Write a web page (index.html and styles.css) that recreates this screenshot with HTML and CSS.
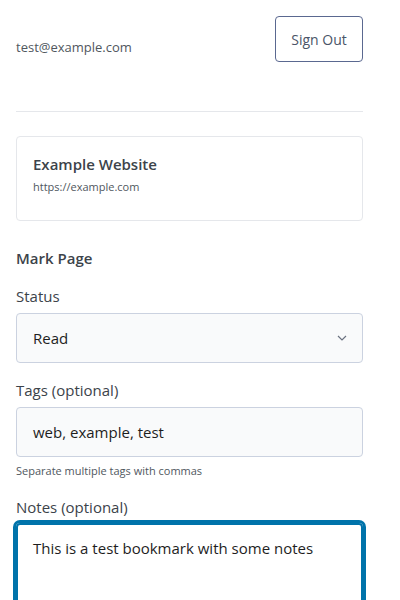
FILE: index.html
```html
<!DOCTYPE html>
<html>
<head>
<meta charset="utf-8">
<link rel="stylesheet" href="styles.css">
</head>
<body>
<div class="app">
  <header class="header">
    <span class="email">test@example.com</span>
    <button class="signout">Sign Out</button>
  </header>
  <hr class="divider">
  <div class="card">
    <div class="card-title">Example Website</div>
    <div class="card-url">https://example.com</div>
  </div>
  <h2 class="section">Mark Page</h2>
  <div class="field">
    <label class="label">Status</label>
    <div class="select">
      <span>Read</span>
      <svg class="chev" width="10" height="6" viewBox="0 0 10 6"><path d="M1 1l4 4 4-4" fill="none" stroke="#6b7280" stroke-width="1.2"/></svg>
    </div>
  </div>
  <div class="field field-tags">
    <label class="label">Tags (optional)</label>
    <div class="input">web, example, test</div>
    <div class="help">Separate multiple tags with commas</div>
  </div>
  <div class="field field-notes">
    <label class="label">Notes (optional)</label>
    <div class="textarea">This is a test bookmark with some notes</div>
  </div>
</div>
</body>
</html>
```
FILE: styles.css
```css
html, body { margin: 0; padding: 0; background: #fff; }
body { font-family: "Open Sans", "Noto Sans", sans-serif; color: #333; overflow: hidden; height: 600px; }
.app { width: 347px; padding: 16px 0 0 16px; }
.header { display: flex; justify-content: space-between; align-items: center; height: 46px; }
.email { font-size: 13px; color: #50575e; padding-top: 16px; }
.signout { font-family: inherit; font-size: 14px; color: #4a5568; background: #fff; border: 1px solid #5a6890; border-radius: 4px; width: 88px; height: 46px; padding: 0; }
.divider { border: 0; border-top: 1px solid #e5e7eb; margin: 49px 0 24px; }
.card { border: 1px solid #e5e7eb; border-radius: 4px; padding: 16px 16px 0; box-sizing: border-box; height: 85px; }
.card-title { font-size: 15px; font-weight: 600; color: #3c434a; line-height: 22px; }
.card-url { font-size: 11px; color: #50575e; margin-top: 4px; }
.section { font-size: 15px; font-weight: 600; color: #3c434a; margin: 26px 0 0; line-height: 22px; }
.field { margin-top: 17px; }
.field-notes { margin-top: 19px; }
.label { display: block; font-size: 15px; color: #3c434a; line-height: 20px; margin-bottom: 7px; }
.select, .input { height: 50px; box-sizing: border-box; border: 1px solid #cbd2e0; border-radius: 4px; background: #f9fafb; display: flex; align-items: center; padding: 0 16px; font-size: 15px; color: #1e1e1e; }
.select { justify-content: space-between; padding-right: 15px; }
.help { font-size: 11px; color: #50575e; margin-top: 6px; }
.textarea { border: 2px solid #0073aa; box-shadow: 0 0 0 3px #0073aa; border-radius: 4px; height: 120px; padding: 13px 15px; font-size: 15px; color: #1e1e1e; margin-top: -1px; }
```
